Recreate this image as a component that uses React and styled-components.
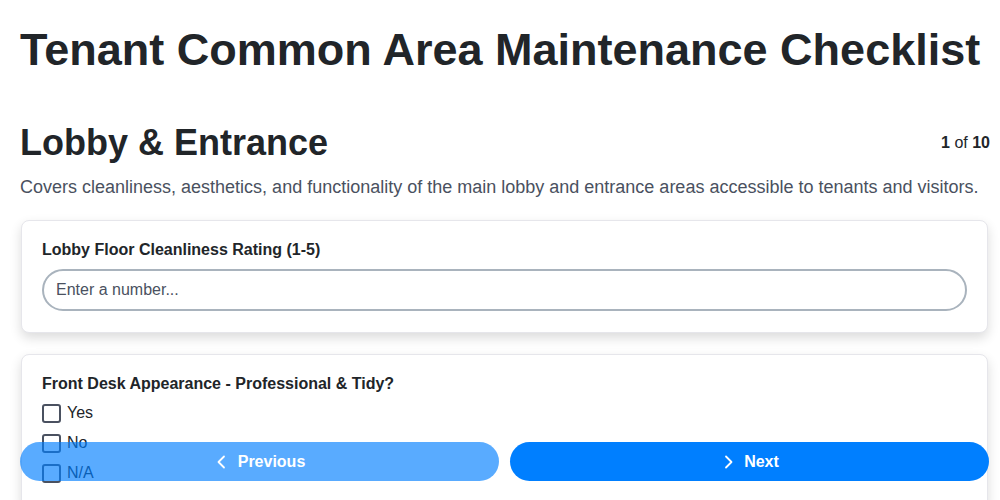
import styled, { createGlobalStyle } from "styled-components";

const GlobalStyle = createGlobalStyle`
  body {
    margin: 0;
    background: #fff;
    font-family: "Liberation Sans", Arial, sans-serif;
    color: #212529;
  }
`;

const Page = styled.main`
  padding: 0 10px 100px 20px;
`;

const Title = styled.h1`
  font-size: 45px;
  font-weight: 700;
  margin: 0;
  padding-top: 24px;
  line-height: 52px;
  white-space: nowrap;
`;

const SectionHead = styled.div`
  display: flex;
  align-items: center;
  justify-content: space-between;
  margin-top: 45px;
`;

const SectionTitle = styled.h2`
  font-size: 36px;
  font-weight: 700;
  margin: 0;
  line-height: 44px;
`;

const Counter = styled.div`
  font-size: 16px;
  color: #212529;
  b {
    font-weight: 700;
  }
`;

const Description = styled.p`
  font-size: 18px;
  color: #4a5160;
  margin: 12px 0 22px;
`;

const Card = styled.section`
  background: #fff;
  border: 1px solid #e6e6eb;
  border-radius: 8px;
  box-shadow: 0 5px 12px rgba(0, 0, 0, 0.14);
  padding: 20px 20px 21px;
  margin: 0 2px 21px 1px;
`;

const Label = styled.div`
  font-size: 16px;
  font-weight: 700;
  color: #212529;
  margin-bottom: ${(p) => p.$gap}px;
`;

const Input = styled.input`
  box-sizing: border-box;
  width: 100%;
  height: 42px;
  border: 2px solid #a9b3bd;
  border-radius: 21px;
  padding: 0 12px;
  font-family: inherit;
  font-size: 16px;
  color: #212529;
  outline: none;
  &::placeholder {
    color: #4a5160;
  }
`;

const Option = styled.label`
  display: flex;
  align-items: center;
  gap: 6px;
  font-size: 16px;
  height: 30px;
  color: #212529;
`;

const Box = styled.span`
  box-sizing: border-box;
  width: 19px;
  height: 19px;
  border: 2px solid #4a5160;
  border-radius: 3px;
`;

const NavBar = styled.nav`
  position: fixed;
  left: 20px;
  right: 11px;
  bottom: 19px;
  display: flex;
  gap: 11px;
`;

const NavButton = styled.button`
  flex: 1;
  height: 39px;
  border: none;
  border-radius: 20px;
  background: #007fff;
  opacity: ${(p) => (p.$disabled ? 0.65 : 1)};
  color: #fff;
  font-family: inherit;
  font-size: 16px;
  font-weight: 700;
  display: flex;
  align-items: center;
  justify-content: center;
  gap: 8px;
  svg {
    width: 16px;
    height: 16px;
  }
`;

const Chevron = ({ dir }) => (
  <svg viewBox="0 0 16 16" fill="none" stroke="currentColor" strokeWidth="1.8" strokeLinecap="round" strokeLinejoin="round">
    {dir === "left" ? <path d="M10 2.5 4.5 8l5.5 5.5" /> : <path d="M6 2.5 11.5 8 6 13.5" />}
  </svg>
);

export default function App() {
  return (
    <>
      <GlobalStyle />
      <Page>
        <Title>Tenant Common Area Maintenance Checklist</Title>
        <SectionHead>
          <SectionTitle>Lobby &amp; Entrance</SectionTitle>
          <Counter>
            <b>1</b> of <b>10</b>
          </Counter>
        </SectionHead>
        <Description>
          Covers cleanliness, aesthetics, and functionality of the main lobby and entrance areas accessible to tenants and visitors.
        </Description>
        <Card>
          <Label $gap={10}>Lobby Floor Cleanliness Rating (1-5)</Label>
          <Input type="number" placeholder="Enter a number..." />
        </Card>
        <Card>
          <Label $gap={5}>Front Desk Appearance - Professional &amp; Tidy?</Label>
          {["Yes", "No", "N/A"].map((o) => (
            <Option key={o}>
              <Box />
              {o}
            </Option>
          ))}
        </Card>
      </Page>
      <NavBar>
        <NavButton $disabled>
          <Chevron dir="left" />
          Previous
        </NavButton>
        <NavButton>
          <Chevron dir="right" />
          Next
        </NavButton>
      </NavBar>
    </>
  );
}
